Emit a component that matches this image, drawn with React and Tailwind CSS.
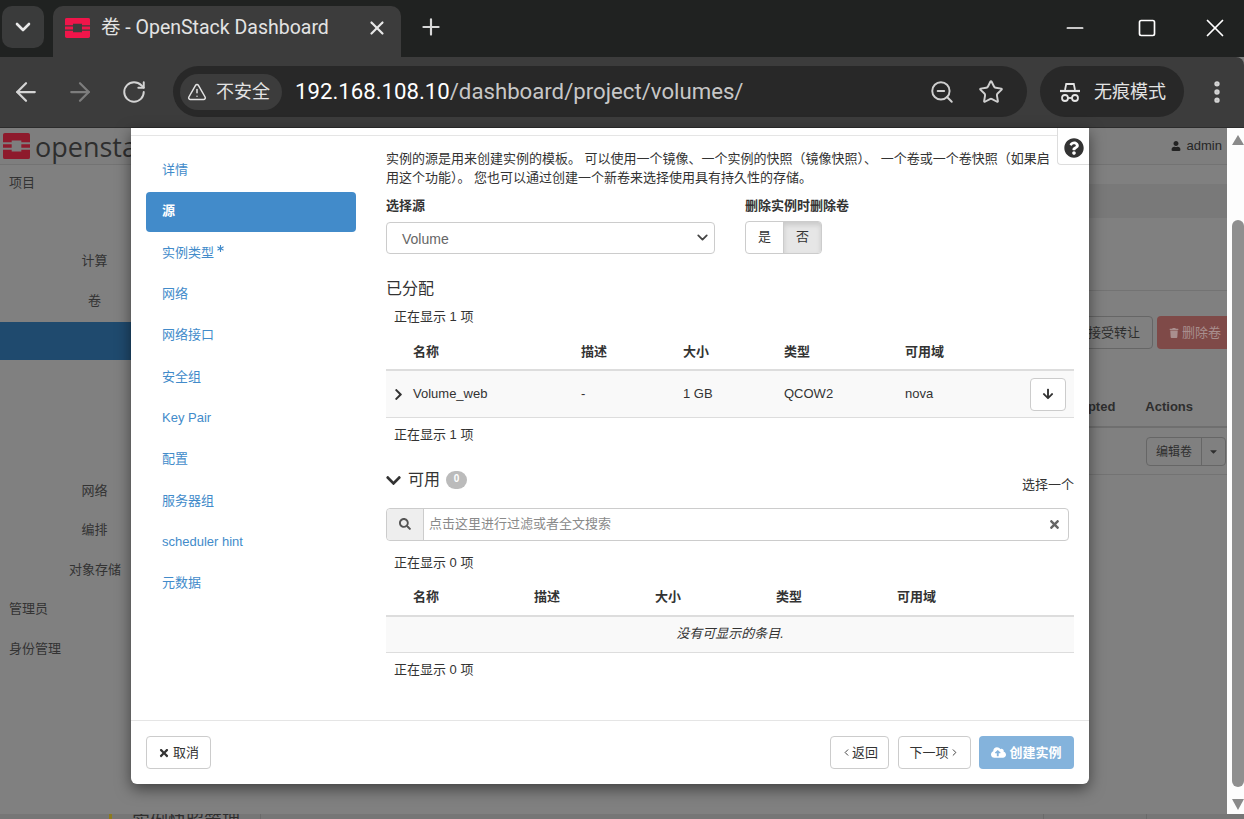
import React from 'react'
import { ChevronDown, ChevronLeft, ChevronRight, Plus, X, ArrowLeft, ArrowRight, RotateCw, TriangleAlert, ZoomOut, Star, Minus, Square, EllipsisVertical } from 'lucide-react'
import { FaChevronRight, FaChevronDown, FaArrowDown, FaSearch, FaTimes, FaQuestionCircle, FaUser, FaTrash, FaCloudUploadAlt, FaCaretDown, FaAsterisk } from 'react-icons/fa'

const SANS = 'font-["Liberation_Sans","Noto_Sans_CJK_SC",sans-serif]'

const steps = ['详情', '源', '实例类型', '网络', '网络接口', '安全组', 'Key Pair', '配置', '服务器组', 'scheduler hint', '元数据']

const Logo = ({ className, color }) => (
  <svg viewBox="0 0 28 28" preserveAspectRatio="none" className={className}>
    <path fill={color} d="M2 0h24a2 2 0 0 1 2 2v8h-9V8H9v2H0V2a2 2 0 0 1 2-2zM0 12h9v4H0zM19 12h9v4h-9zM0 18h9v2h10v-2h9v8a2 2 0 0 1-2 2H2a2 2 0 0 1-2-2z" />
  </svg>
)

const Incognito = () => (
  <svg viewBox="0 0 22 22" className="w-[22px] h-[22px]" fill="none" stroke="#e3e3e3" strokeWidth="1.8">
    <path d="M6 9l1.2-6h7.6L16 9" />
    <path d="M1 10h20" strokeWidth="2.2" />
    <circle cx="6" cy="17" r="3" />
    <circle cx="16" cy="17" r="3" />
    <path d="M9 17h4" />
  </svg>
)

const BrowserBar = () => (
  <div className='shrink-0 font-["Roboto","Noto_Sans_CJK_SC",sans-serif]'>
    <div className="h-[57px] bg-[#202221] flex items-end pl-[2px]">
      <div className="w-[42px] h-[42px] mb-[9px] rounded-[10px] bg-[#3a3b3b] flex items-center justify-center">
        <ChevronDown size={24} color="#e8e8e8" strokeWidth={2.6} />
      </div>
      <div className="w-[348px] h-[51px] ml-[9px] rounded-t-[10px] bg-[#3c3c3c] flex items-center pl-[12px] pr-[13px] pb-[7px]">
        <Logo className="w-[25px] h-[20px]" color="#f0154a" />
        <span className="ml-[11px] text-[19.5px] leading-none whitespace-nowrap text-[#e3e3e3]">卷 - OpenStack Dashboard</span>
        <X size={22} color="#e8e8e8" strokeWidth={2.4} className="ml-auto" />
      </div>
      <div className="ml-[17px] mb-[15px] h-[30px] flex items-center">
        <Plus size={26} color="#d8d8d8" strokeWidth={2} />
      </div>
      <div className="ml-auto flex items-center h-full pb-[1px]">
        <Minus size={26} color="#fff" strokeWidth={1.6} />
        <Square size={20} color="#fff" strokeWidth={2} className="ml-[49px]" />
        <X size={30} color="#fff" strokeWidth={1.4} className="ml-[43px] mr-[14px]" />
      </div>
    </div>
    <div className="h-[71px] pb-[1px] bg-[#3c3c3c] border-b border-[#2c2c2c] flex items-center pl-[11px] pr-[3px] rounded-tr-[8px]">
      <ArrowLeft size={30} color="#d4d4d4" strokeWidth={1.8} />
      <ArrowRight size={30} color="#7d7d7d" strokeWidth={1.8} className="ml-[24px]" />
      <RotateCw size={26} color="#d4d4d4" strokeWidth={1.8} className="ml-[26px]" />
      <div className="ml-[26px] w-[854px] h-[51px] rounded-full bg-[#282828] flex items-center pl-[7px] pr-[23px]">
        <div className="h-[36px] w-[102px] rounded-full bg-[#3c3c3c] flex items-center pl-[7px]">
          <TriangleAlert size={20} color="#e3e3e3" strokeWidth={1.8} />
          <span className="ml-[9px] text-[18px] text-[#e3e3e3]">不安全</span>
        </div>
        <span className="ml-[13px] text-[22.2px] leading-none text-[#c7c7c7]"><span className="text-white">192.168.108.10</span>/dashboard/project/volumes/</span>
        <ZoomOut size={26} color="#cfcfcf" strokeWidth={1.8} className="ml-auto" />
        <Star size={26} color="#cfcfcf" strokeWidth={1.8} className="ml-[23px]" />
      </div>
      <div className="ml-[13px] w-[144px] h-[51px] rounded-full bg-[#282828] flex items-center pl-[19px]">
        <Incognito />
        <span className="ml-[13px] text-[18px] text-[#e3e3e3]">无痕模式</span>
      </div>
      <EllipsisVertical size={28} color="#d4d4d4" strokeWidth={2.6} className="ml-auto mr-[10px]" />
    </div>
  </div>
)

const SubItem = ({ className = '', children }) => (
  <div className={`ml-[69px] w-[51px] text-center leading-none whitespace-nowrap ${className}`}>{children}</div>
)

const BackPage = () => (
  <div className={`flex-1 flex flex-col min-w-0 bg-[#808080] ${SANS}`}>
    <div className="h-[37px] shrink-0 border-b border-[#737373] flex items-center pl-[3px] pr-[5px] bg-[#7e7e7e]">
      <Logo className="w-[27px] h-[26px]" color="#8e1a2c" />
      <span className='ml-[5px] text-[27px] leading-none font-["Open_Sans",sans-serif] font-medium text-[#2e2e2e]'>openstack</span>
      <div className="ml-auto flex items-center gap-[6px] text-[13px] text-[#262626]">
        <FaUser size={10} color="#222" />
        <span>admin</span>
      </div>
    </div>
    <div className="flex-1 flex min-h-0">
      <div className="w-[131px] shrink-0 flex flex-col pt-[11px] text-[13px] text-[#333]">
        <div className="ml-[9px] leading-none">项目</div>
        <SubItem className="mt-[65px]">计算</SubItem>
        <SubItem className="mt-[27px]">卷</SubItem>
        <div className="mt-[15px] h-[38px] shrink-0 bg-[#1f4a6e]" />
        <SubItem className="mt-[124px]">网络</SubItem>
        <SubItem className="mt-[26px]">编排</SubItem>
        <SubItem className="mt-[27px]">对象存储</SubItem>
        <div className="ml-[9px] mt-[26px] leading-none">管理员</div>
        <div className="ml-[9px] mt-[27px] leading-none">身份管理</div>
      </div>
      <div className="flex-1 min-w-0 flex flex-col items-stretch overflow-hidden text-[13px] text-[#2e2e2e]">
        <div className="mt-[19px] h-[34px] bg-[#797979] shrink-0" />
        <div className="mt-[72px] border-t border-[#737373] shrink-0" />
        <div className="mt-[25px] h-[33px] flex justify-end gap-[4px] shrink-0">
          <div className="w-[68px] rounded-[4px] border border-[#666] flex items-center justify-end pr-[12px]">接受转让</div>
          <div className="w-[70px] rounded-l-[4px] bg-[#7f4a48] flex items-center pl-[12px] text-[#a98f8e] gap-[3px]">
            <FaTrash size={10} />删除卷
          </div>
        </div>
        <div className="mt-[45px] h-[34px] pb-[6px] flex justify-end items-center gap-[30px] pr-[34px] font-bold border-b-2 border-[#6f6f6f] shrink-0">
          <span>pted</span><span>Actions</span>
        </div>
        <div className="h-[47px] border-b border-[#737373] flex justify-end items-start pt-[9px] pr-[1px] shrink-0">
          <div className="h-[29px] w-[80px] rounded-[4px] border border-[#666] flex text-[12px]">
            <div className="flex-1 flex items-center justify-center border-r border-[#666]">编辑卷</div>
            <div className="w-[23px] flex items-center justify-center"><FaCaretDown size={11} /></div>
          </div>
        </div>
      </div>
    </div>
  </div>
)

const Scrollbar = () => (
  <div className="w-[17px] shrink-0 bg-[#fdfdfd] flex flex-col items-end pl-[5px]">
    <div className="h-0 w-0 mt-[7px] border-x-[6.5px] border-b-[10px] border-x-transparent border-b-[#8a8a8a]" />
    <div className="w-full mt-[75px] flex-1 rounded-[6px] bg-[#8f8f8f]" />
    <div className="h-0 w-0 mt-[12px] mb-[4px] border-x-[6.5px] border-t-[11px] border-x-transparent border-t-[#8a8a8a]" />
  </div>
)

const BottomStrip = () => (
  <div className={`h-[5px] shrink-0 bg-[#767676] flex overflow-hidden ${SANS}`}>
    <div className="ml-[109px] w-[3px] bg-[#8c7a1e]" />
    <div className="ml-[20px] w-[129px] border-r border-[#6a6a6a] text-[18px] leading-[18px] text-[#2e2e2e] whitespace-nowrap -mt-[1px]">实例快照管理</div>
    <div className="ml-[782px] w-[104px] border-x border-[#6a6a6a]" />
  </div>
)

const Btn = ({ className = '', children }) => (
  <div className={`h-[33px] rounded-[4px] border border-[#ccc] bg-white flex items-center justify-center text-[13px] text-[#333] ${className}`}>{children}</div>
)

const COLS1 = 'grid grid-cols-[27px_168px_102px_101px_121px_1fr]'
const COLS2 = 'grid grid-cols-[27px_121px_121px_121px_121px_1fr]'

const WizardSource = () => (
  <div className="w-[688px] text-[13px] leading-[18.57px] text-[#333]">
    <p className="w-[672px] pt-[13px] leading-[19px]">实例的源是用来创建实例的模板。 可以使用一个镜像、一个实例的快照（镜像快照）、 一个卷或一个卷快照（如果启用这个功能）。 您也可以通过创建一个新卷来选择使用具有持久性的存储。</p>
    <div className="flex mt-[10px]">
      <div className="w-[329px]">
        <div className="font-bold">选择源</div>
        <div className="mt-[6px] h-[32px] rounded-[4px] border border-[#ccc] flex items-center pl-[15px] pr-[3px] text-[14px] text-[#666]">
          <span className="pt-[3px]">Volume</span>
          <ChevronDown size={17} color="#444" strokeWidth={2.5} className="ml-auto" />
        </div>
      </div>
      <div className="ml-[30px]">
        <div className="font-bold">删除实例时删除卷</div>
        <div className="mt-[5px] h-[33px] w-[77px] flex rounded-[4px] border border-[#ccc] overflow-hidden">
          <div className="flex-1 flex items-center justify-center">是</div>
          <div className="flex-1 flex items-center justify-center border-l border-[#ccc] bg-[#e6e6e6] shadow-[inset_0_3px_5px_rgba(0,0,0,0.125)]">否</div>
        </div>
      </div>
    </div>

    <h4 className="mt-[25px] text-[16px] leading-[20px] text-[#333]">已分配</h4>
    <div className="mt-[9px] pl-[8px]">正在显示 1 项</div>
    <div className={`${COLS1} mt-[17px] h-[28px] font-bold border-b-2 border-[#ddd] pb-[8px] items-center`}>
      <span />
      <span>名称</span><span>描述</span><span>大小</span><span>类型</span><span>可用域</span>
    </div>
    <div className={`${COLS1} h-[47px] items-center bg-[#f9f9f9] border-b border-[#ddd]`}>
      <span className="pl-[6px]"><FaChevronRight size={13} color="#333" /></span>
      <span>Volume_web</span><span>-</span><span>1 GB</span><span>QCOW2</span>
      <div className="flex items-center justify-between pr-[8px]">
        <span>nova</span>
        <Btn className="w-[36px] h-[30px]"><FaArrowDown size={12} color="#333" /></Btn>
      </div>
    </div>
    <div className="mt-[8px] pl-[8px]">正在显示 1 项</div>

    <div className="mt-[25px] flex items-start h-[30px]">
      <FaChevronDown size={17} color="#333" className="mt-[2px] -ml-[1px]" />
      <span className="ml-[6px] text-[16px] leading-[20px]">可用</span>
      <span className="ml-[6px] mt-[1px] w-[21px] h-[18px] rounded-full bg-[#bbb] text-white text-[10px] font-bold flex items-center justify-center">0</span>
      <span className="ml-auto mt-[6px]">选择一个</span>
    </div>
    <div className="mt-[8px] w-[683px] h-[33px] rounded-[4px] border border-[#ccc] flex items-center">
      <div className="w-[37px] h-full bg-[#eee] border-r border-[#ccc] rounded-l-[4px] flex items-center justify-center">
        <FaSearch size={12} color="#555" />
      </div>
      <span className="ml-[5px] text-[#8a8a8a] text-[13px]">点击这里进行过滤或者全文搜索</span>
      <FaTimes size={13} color="#666" className="ml-auto mr-[7px]" />
    </div>
    <div className="mt-[13px] pl-[8px]">正在显示 0 项</div>
    <div className={`${COLS2} mt-[15px] h-[30px] font-bold border-b-2 border-[#ddd] pb-[8px] items-center`}>
      <span />
      <span>名称</span><span>描述</span><span>大小</span><span>类型</span><span>可用域</span>
    </div>
    <div className="h-[36px] bg-[#f9f9f9] border-b border-[#ddd] flex items-center justify-center italic">没有可显示的条目.</div>
    <div className="mt-[8px] pl-[8px]">正在显示 0 项</div>
  </div>
)

const Modal = () => (
  <div className={`absolute left-[131px] top-0 w-[958px] h-[656px] bg-white rounded-b-[6px] shadow-[0_5px_15px_rgba(0,0,0,0.5)] flex flex-col ${SANS}`}>
    <div className="h-[8px] border-b border-[#e5e5e5] shrink-0" />
    <div className="absolute right-0 top-0 w-[32px] h-[37px] bg-white border-l border-b border-[#ddd] rounded-bl-[4px] flex items-center justify-center pt-[3px]">
      <FaQuestionCircle size={20} color="#333" />
    </div>
    <div className="flex-1 flex min-h-0 pl-[15px]">
      <div className="w-[210px] shrink-0 pt-[15px] flex flex-col gap-[2px] text-[13px]">
        {steps.map(s => (
          <div key={s} className={`h-[39.33px] rounded-[4px] pl-[16px] pb-[2px] flex items-center ${s === '源' ? 'bg-[#428bca] text-white font-bold' : 'text-[#428bca]'}`}>
            {s}
            {s === '实例类型' && <FaAsterisk size={7} className="ml-[3px] -mt-[8px]" />}
          </div>
        ))}
      </div>
      <div className="ml-[30px]">
        <WizardSource />
      </div>
    </div>
    <div className="h-[64px] shrink-0 border-t border-[#e5e5e5] flex items-start pt-[15px] px-[15px]">
      <Btn className="w-[65px] gap-[3px]"><FaTimes size={12} color="#333" />取消</Btn>
      <Btn className="w-[59px] ml-auto"><ChevronLeft size={11} color="#333" strokeWidth={2} />返回</Btn>
      <Btn className="w-[73px] ml-[9px]">下一项<ChevronRight size={11} color="#333" strokeWidth={2} /></Btn>
      <div className="w-[95px] h-[33px] ml-[8px] rounded-[4px] bg-[#84b3dc] text-white text-[13px] font-bold flex items-center justify-center gap-[3px]">
        <FaCloudUploadAlt size={15} />创建实例
      </div>
    </div>
  </div>
)

const App = () => (
  <div className="w-[1244px] h-[819px] overflow-hidden flex flex-col bg-[#808080]">
    <BrowserBar />
    <div className="flex-1 min-h-0 relative flex flex-col">
      <div className="flex-1 min-h-0 flex">
        <BackPage />
        <Scrollbar />
      </div>
      <BottomStrip />
      <Modal />
    </div>
  </div>
)

export default App
